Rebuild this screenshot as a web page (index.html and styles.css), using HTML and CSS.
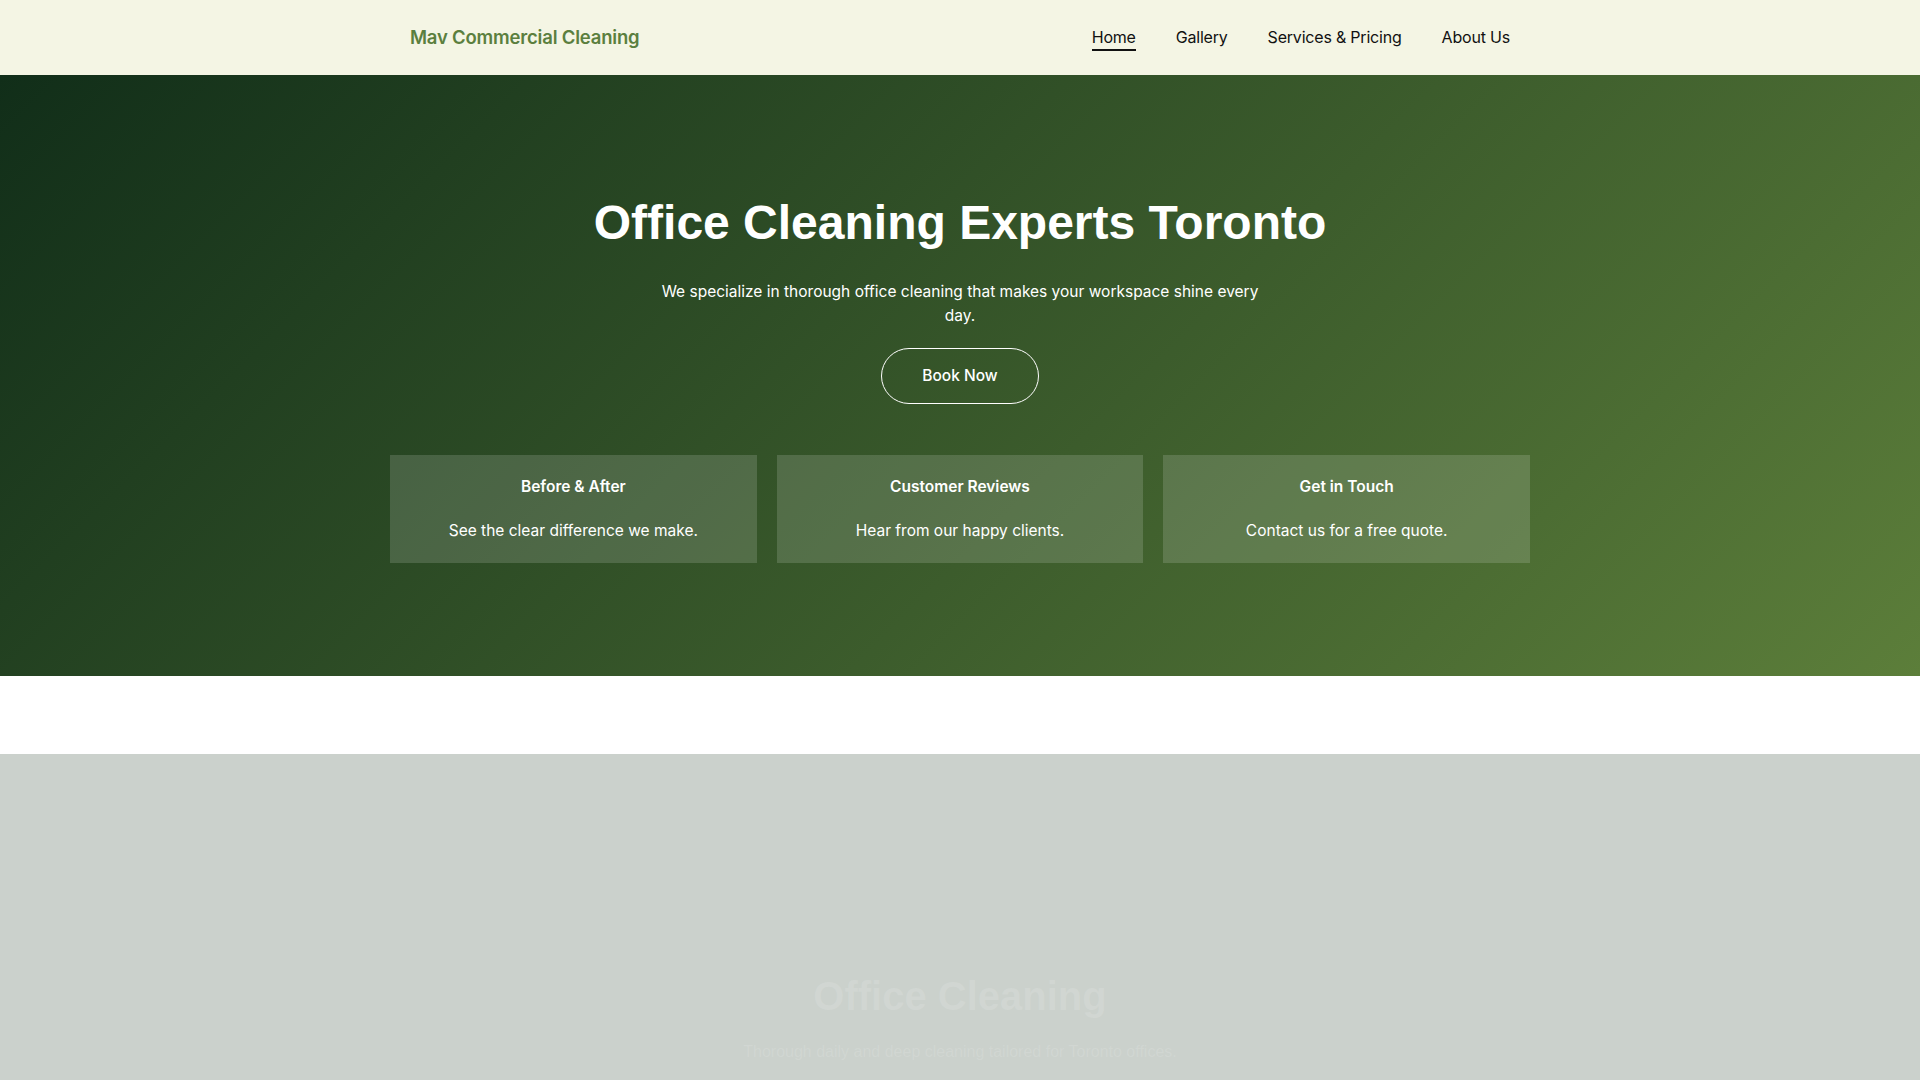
FILE: index.html
```html
<!doctype html>
<html lang="en">
	<head>
		<meta charset="UTF-8">
		<title>Mav Commercial Cleaning</title>
		<link rel="stylesheet" href="styles.css">
	</head>
	<body>
		<header class="site-header">
			<div class="container header-inner">
				<a class="logo" href="#">Mav Commercial Cleaning</a>
				<ul class="nav">
					<li><a class="active" href="#">Home</a></li>
					<li><a href="#">Gallery</a></li>
					<li><a href="#">Services &amp; Pricing</a></li>
					<li><a href="#">About Us</a></li>
				</ul>
			</div>
		</header>

		<section class="hero">
			<div class="hero-inner">
				<h1>Office Cleaning Experts Toronto</h1>
				<p class="lead">We specialize in thorough office cleaning that makes your workspace shine every day.</p>
				<a class="btn" href="#">Book Now</a>
				<div class="cards">
					<div class="card">
						<h3>Before &amp; After</h3>
						<p>See the clear difference we make.</p>
					</div>
					<div class="card">
						<h3>Customer Reviews</h3>
						<p>Hear from our happy clients.</p>
					</div>
					<div class="card">
						<h3>Get in Touch</h3>
						<p>Contact us for a free quote.</p>
					</div>
				</div>
			</div>
		</section>

		<section class="banner">
			<h2>Office Cleaning</h2>
			<p>Thorough daily and deep cleaning tailored for Toronto offices.</p>
		</section>
	</body>
</html>
```

FILE: styles.css
```css
*{ margin: 0; padding: 0; box-sizing: border-box;}
li{ list-style: none;}
a{ text-decoration: none; color: inherit;}
body{
	font-family: Inter, "Noto Sans", sans-serif;
	font-size: 16px;
	line-height: 1.5;
	color: #111;
	background: #fff;
}
.container{
	width: 1140px;
	margin: 0 auto;
	padding: 0 20px;
}

/* header */
.site-header{
	background: #f4f5e4;
}
.header-inner{
	display: flex;
	align-items: center;
	justify-content: space-between;
	height: 75px;
}
.logo{
	font-size: 18.5px;
	font-weight: 600;
	color: #5b7f3e;
	letter-spacing: -0.2px;
}
.nav{
	display: flex;
	gap: 40px;
}
.nav a{
	display: block;
	font-size: 16px;
	line-height: 24px;
	color: #111;
	letter-spacing: -0.2px;
	border-bottom: 2px solid transparent;
}
.nav a.active{
	border-bottom-color: #111;
}

/* hero */
.hero{
	background: linear-gradient(135deg, #112e19 0%, #5c7e3a 100%);
	padding: 119px 0 113px;
	text-align: center;
	color: #fff;
}
.hero-inner{
	width: 1140px;
	margin: 0 auto;
}
.hero h1{
	font-family: "Liberation Sans", Arial, sans-serif;
	font-size: 48px;
	line-height: 1.2;
	font-weight: 700;
	margin-bottom: 28px;
}
.hero .lead{
	max-width: 600px;
	margin: 0 auto 20px;
	font-size: 15.5px;
	line-height: 24px;
}
.btn{
	display: inline-block;
	padding: 15px 40px;
	border: 1px solid #fff;
	border-radius: 30px;
	font-size: 15.5px;
	font-weight: 500;
	line-height: 24px;
	color: #fff;
}
.cards{
	display: grid;
	grid-template-columns: repeat(3, 1fr);
	gap: 20px;
	margin-top: 51px;
}
.card{
	background: rgba(255, 255, 255, 0.15);
	padding: 20px;
}
.card h3{
	font-size: 15.5px;
	font-weight: 600;
	line-height: 24px;
	margin-bottom: 20px;
}
.card p{
	font-size: 15.5px;
	line-height: 24px;
}

/* second banner */
.banner{
	margin-top: 78px;
	min-height: 600px;
	background: #cbd1cc;
	padding-top: 218px;
	text-align: center;
	font-family: "Liberation Sans", Arial, sans-serif;
	color: rgba(255, 255, 255, 0.13);
}
.banner h2{
	font-size: 40px;
	line-height: 1.2;
	font-weight: 700;
	margin-bottom: 20px;
}
.banner p{
	font-size: 16px;
	line-height: 24px;
}
```
